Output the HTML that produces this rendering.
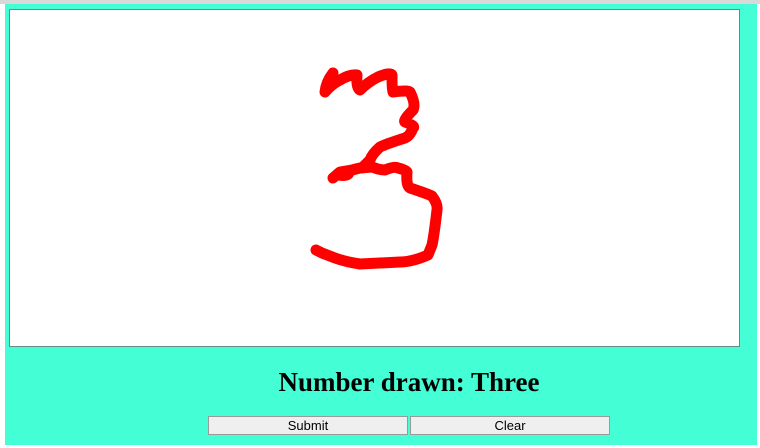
<!DOCTYPE html>
<html><head><style>
html,body{margin:0;padding:0;width:760px;height:448px;overflow:hidden;background:#fff;}
#top{position:absolute;left:0;top:0;width:760px;height:4px;background:#d8d8d8;}
#g{position:absolute;left:5px;top:4px;width:752px;height:441px;background:#44fed6;}
#c{position:absolute;left:9px;top:9px;width:729px;height:336px;background:#fff;border:1px solid #6a8a82;}
h1{position:absolute;left:0;width:818px;top:367px;margin:0;text-align:center;font:bold 27px "Liberation Serif",serif;color:#000;}
.b{position:absolute;top:416px;width:198px;height:17px;background:#efefef;border:1px solid #9a9a9a;font:13px "Liberation Sans",sans-serif;text-align:center;line-height:17px;color:#000;box-sizing:content-box;}
svg{position:absolute;left:0;top:0;}
</style></head><body>
<div id="top"></div><div id="g"></div><div id="c"></div>
<svg width="760" height="448"><path d="M333,73 Q326,82 325,92 Q332,84 340,80 Q350,74 357,75 Q356,88 360,90 Q368,82 378,77 Q390,72 392,75 Q392,90 393,92 Q408,90 410,92 Q416,104 413,110 Q403,120 405,122 Q416,126 413,128 Q410,136 405,138 Q386,144 380,147 Q372,154 370,160 L362,168 M333,178 L340,172 L352,170 L360,168 L372,167 Q380,170 385,170 Q395,166 398,168 Q406,170 407,172 Q406,186 410,188 Q428,194 432,196 Q438,204 437,210 Q434,236 432,245 L428,255 Q412,262 400,262 L360,264 Q346,262 335,258 L322,253 L316,250" fill="none" stroke="#ff0000" stroke-width="11" stroke-linecap="round" stroke-linejoin="round"/>
<ellipse cx="343" cy="174" rx="11" ry="7" fill="#ff0000"/></svg>
<h1>Number drawn: Three</h1>
<div class="b" style="left:208px">Submit</div>
<div class="b" style="left:410px">Clear</div>
</body></html>
